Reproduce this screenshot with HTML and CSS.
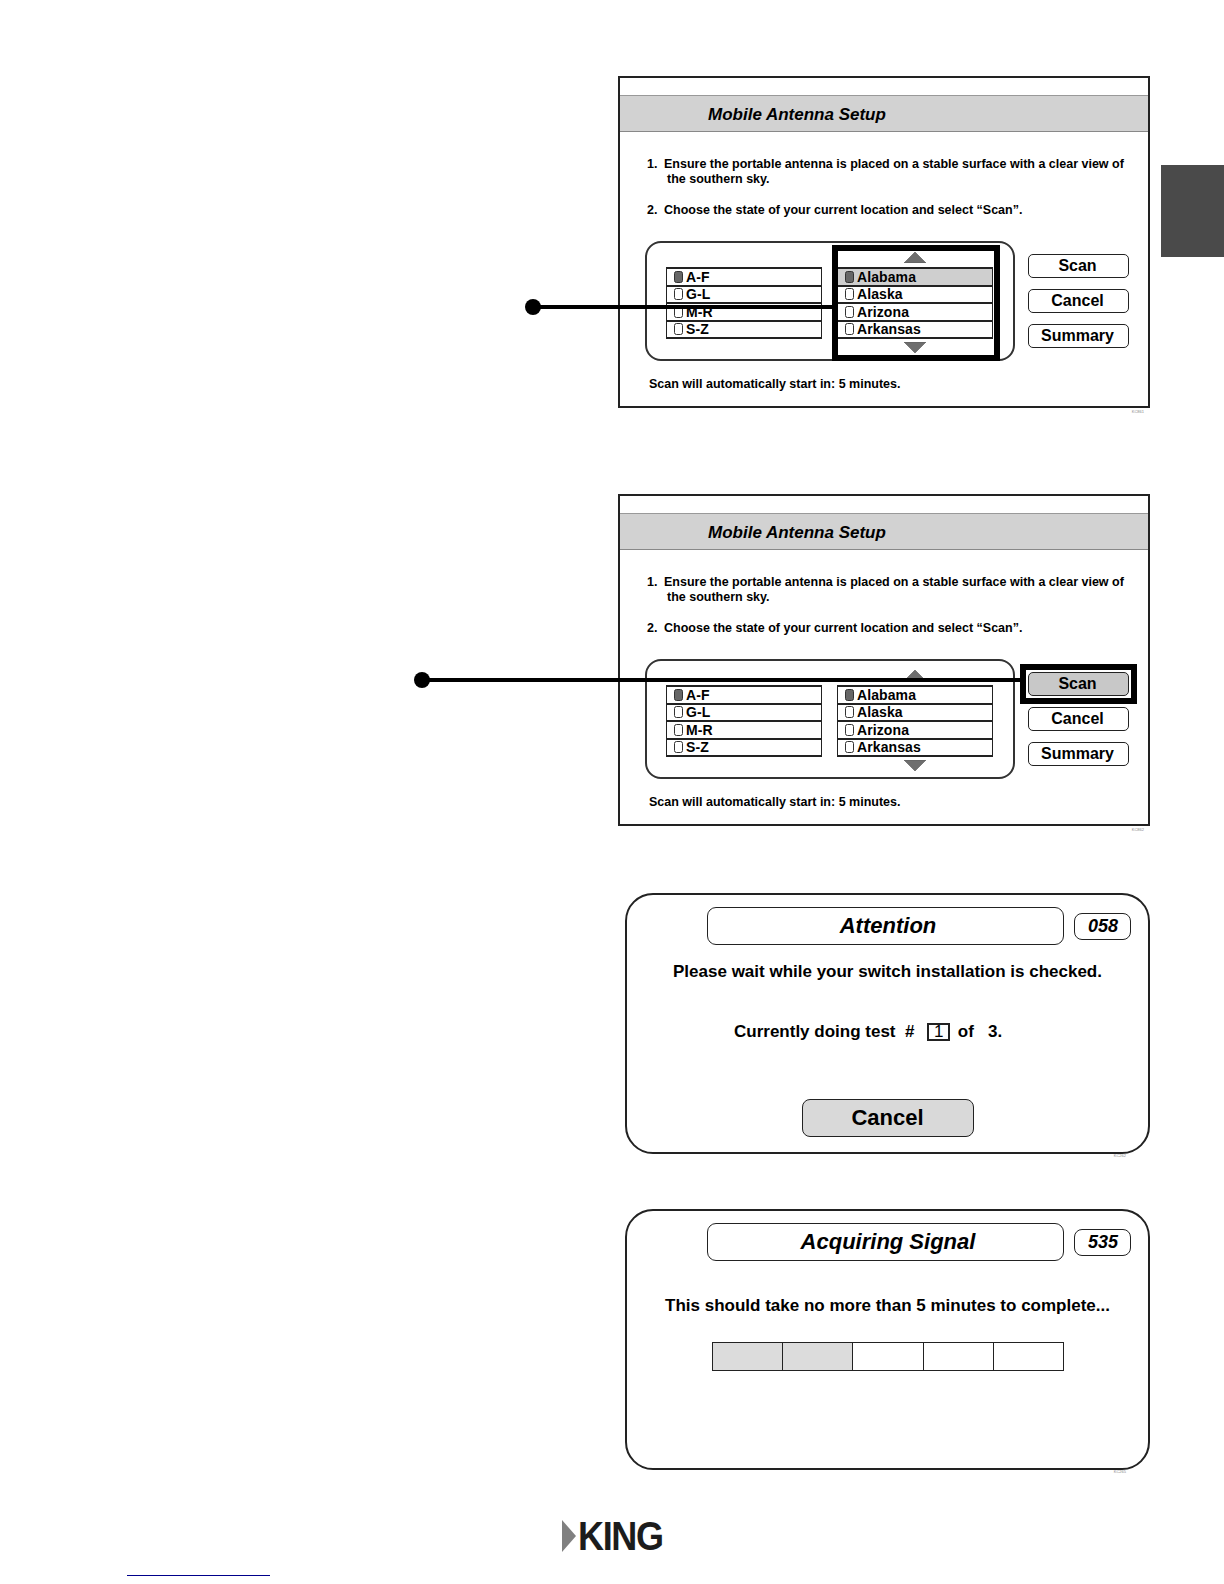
FILE: index.html
```html
<!DOCTYPE html>
<html lang="en">
<head>
<meta charset="utf-8">
<title>Mobile Antenna Setup</title>
<link rel="stylesheet" href="styles.css">
</head>
<body>
<main class="page">
  <div class="side-tab"></div>

  <section class="screen screen-first">
    <h2 class="band">Mobile Antenna Setup</h2>
    <ol class="steps">
      <li class="step"><span class="step-num">1.</span><span>Ensure the portable antenna is placed on a stable surface with a clear view of<br><span class="step-cont">the southern sky.</span></span></li>
      <li class="step step-gap"><span class="step-num">2.</span><span>Choose the state of your current location and select “Scan”.</span></li>
    </ol>
    <div class="controls">
      <div class="picker">
        <ul class="list list-regions">
          <li class="row"><i class="radio on"></i>A-F</li>
          <li class="row"><i class="radio"></i>G-L</li>
          <li class="row"><i class="radio"></i>M-R</li>
          <li class="row"><i class="radio"></i>S-Z</li>
        </ul>
        <div class="states">
          <svg class="arrow" viewBox="0 0 22 11"><path d="M11 0 22 11H0Z"/></svg>
          <ul class="list">
            <li class="row row-sel"><i class="radio on"></i>Alabama</li>
            <li class="row"><i class="radio"></i>Alaska</li>
            <li class="row"><i class="radio"></i>Arizona</li>
            <li class="row"><i class="radio"></i>Arkansas</li>
          </ul>
          <svg class="arrow" viewBox="0 0 22 11"><path d="M0 0H22L11 11Z"/></svg>
        </div>
      </div>
      <div class="buttons">
        <div class="btn">Scan</div>
        <div class="btn">Cancel</div>
        <div class="btn">Summary</div>
      </div>
    </div>
    <p class="countdown">Scan will automatically start in: 5 minutes.</p>
    <div class="focus focus-list"></div>
    <div class="leader leader-a"></div>
    <span class="code">KC861</span>
  </section>

  <section class="screen screen-second">
    <h2 class="band">Mobile Antenna Setup</h2>
    <ol class="steps">
      <li class="step"><span class="step-num">1.</span><span>Ensure the portable antenna is placed on a stable surface with a clear view of<br><span class="step-cont">the southern sky.</span></span></li>
      <li class="step step-gap"><span class="step-num">2.</span><span>Choose the state of your current location and select “Scan”.</span></li>
    </ol>
    <div class="controls">
      <div class="picker">
        <ul class="list list-regions">
          <li class="row"><i class="radio on"></i>A-F</li>
          <li class="row"><i class="radio"></i>G-L</li>
          <li class="row"><i class="radio"></i>M-R</li>
          <li class="row"><i class="radio"></i>S-Z</li>
        </ul>
        <div class="states">
          <svg class="arrow" viewBox="0 0 22 11"><path d="M11 0 22 11H0Z"/></svg>
          <ul class="list">
            <li class="row"><i class="radio on"></i>Alabama</li>
            <li class="row"><i class="radio"></i>Alaska</li>
            <li class="row"><i class="radio"></i>Arizona</li>
            <li class="row"><i class="radio"></i>Arkansas</li>
          </ul>
          <svg class="arrow" viewBox="0 0 22 11"><path d="M0 0H22L11 11Z"/></svg>
        </div>
      </div>
      <div class="buttons">
        <div class="btn btn-sel">Scan</div>
        <div class="btn">Cancel</div>
        <div class="btn">Summary</div>
      </div>
    </div>
    <p class="countdown">Scan will automatically start in: 5 minutes.</p>
    <div class="focus focus-btn"></div>
    <div class="leader leader-b"></div>
    <span class="code">KC862</span>
  </section>

  <section class="dialog dialog-attention">
    <header class="dialog-head">
      <h2 class="dialog-title">Attention</h2>
      <div class="dialog-num">058</div>
    </header>
    <p class="dialog-msg">Please wait while your switch installation is checked.</p>
    <p class="dialog-test">Currently doing test&nbsp; # <span class="digit">1</span> of &nbsp; 3.</p>
    <div class="dialog-cancel">Cancel</div>
    <span class="code code-dialog">KC262</span>
  </section>

  <section class="dialog dialog-signal">
    <header class="dialog-head">
      <h2 class="dialog-title">Acquiring Signal</h2>
      <div class="dialog-num">535</div>
    </header>
    <p class="dialog-msg dialog-msg-wide">This should take no more than 5 minutes to complete...</p>
    <div class="progress">
      <div class="cell cell-on"></div>
      <div class="cell cell-on"></div>
      <div class="cell"></div>
      <div class="cell"></div>
      <div class="cell"></div>
    </div>
    <span class="code code-dialog">KC265</span>
  </section>

  <footer class="brand">
    <svg class="brand-mark" viewBox="0 0 14 32"><path d="M0 0 14 16 0 32Z"/></svg>
    <span class="brand-name">KING</span>
  </footer>
  <div class="rule"></div>
</main>
</body>
</html>
```
FILE: styles.css
```css
* { box-sizing: border-box; margin: 0; padding: 0; }
html, body { background: #fff; }
body { font-family: "Liberation Sans", Arial, sans-serif; color: #000; }
ul, ol { list-style: none; }

.page {
  position: relative;
  width: 1224px;
  height: 1584px;
  padding-top: 76px;
  overflow: hidden;
  display: flex;
  flex-direction: column;
}
.side-tab {
  position: absolute;
  left: 1161px;
  top: 165px;
  width: 63px;
  height: 92px;
  background: #4a4a4a;
}

/* setup screens */
.screen {
  position: relative;
  width: 532px;
  height: 332px;
  margin-left: 618px;
  padding-top: 17px;
  border: 2px solid #222;
}
.screen-second { margin-top: 86px; }
.band {
  height: 37px;
  padding-left: 88px;
  background: #d2d2d2;
  border-top: 1px solid #999;
  border-bottom: 1px solid #888;
  font-size: 17px;
  line-height: 38px;
  font-style: italic;
  font-weight: 700;
}
.steps {
  padding: 25px 0 0 27px;
  font-size: 12.5px;
  line-height: 15px;
  font-weight: 700;
}
.step { display: flex; }
.step-gap { margin-top: 16px; }
.step-num { width: 17px; flex: none; }
.step-cont { padding-left: 3px; }

.controls {
  display: flex;
  gap: 13px;
  margin: 23px 0 0 25px;
}
.picker {
  display: flex;
  align-items: flex-start;
  gap: 15px;
  width: 370px;
  height: 120px;
  padding: 9px 0 0 19px;
  border: 2px solid #333;
  border-radius: 16px;
}
.list-regions { margin-top: 15px; }
.states {
  display: flex;
  flex-direction: column;
  align-items: center;
}
.arrow { display: block; width: 22px; height: 11px; fill: #6e6e6e; stroke: #555; stroke-width: .6; }
.states .list { margin: 4px 0 3px; }
.list {
  display: flex;
  flex-direction: column;
  width: 156px;
  height: 72px;
  border: 1.5px solid #222;
  border-top-width: 2px;
  border-bottom-width: 2px;
}
.row {
  display: flex;
  align-items: center;
  flex: 1 1 0;
  min-height: 0;
  padding-left: 7px;
  font-size: 14px;
  line-height: 14px;
  letter-spacing: .1px;
  font-weight: 700;
  border-bottom: 2px solid #222;
  background: #fff;
}
.row:last-child { border-bottom: 0; }
.row-sel { background: #cfcfcf; }
.radio {
  width: 9px;
  height: 12px;
  margin-right: 3px;
  border: 1.5px solid #333;
  border-radius: 2.5px;
  background: #fff;
}
.radio.on { background: #666; }

.buttons {
  display: flex;
  flex-direction: column;
  gap: 11px;
  padding-top: 12.5px;
}
.btn {
  width: 101px;
  height: 24px;
  padding-right: 2px;
  border: 1.5px solid #222;
  border-radius: 5px;
  font-size: 16px;
  line-height: 21px;
  font-weight: 700;
  text-align: center;
}
.btn-sel { background: #c8c8c8; }
.countdown {
  margin: 16px 0 0 29px;
  font-size: 12.5px;
  line-height: 15px;
  font-weight: 700;
}

/* callouts */
.focus { position: absolute; border: 6px solid #000; }
.focus-list { left: 212px; top: 167px; width: 168px; height: 116px; }
.focus-btn { left: 400px; top: 168px; width: 117px; height: 40px; }
.leader {
  position: absolute;
  height: 4px;
  background: #000;
}
.leader::before {
  content: "";
  position: absolute;
  left: -8px;
  top: -6px;
  width: 16px;
  height: 16px;
  border-radius: 50%;
  background: #000;
}
.leader-a { left: -87px; top: 227px; width: 300px; }
.leader-b { left: -198px; top: 182px; width: 598px; }
.code {
  position: absolute;
  right: 4px;
  bottom: -8px;
  font-size: 4px;
  line-height: 5px;
  color: #888;
}
.code-dialog { right: 22px; bottom: -6px; }

/* dialogs */
.dialog {
  position: relative;
  display: flex;
  flex-direction: column;
  width: 525px;
  height: 261px;
  margin-left: 625px;
  border: 2px solid #222;
  border-radius: 28px;
}
.dialog-attention { margin-top: 67px; }
.dialog-signal { margin-top: 55px; }
.dialog-head {
  display: flex;
  align-items: center;
  gap: 10px;
  padding: 12px 0 0 80px;
}
.dialog-title {
  width: 357px;
  height: 38px;
  padding-left: 5px;
  border: 1.5px solid #222;
  border-radius: 9px;
  font-size: 22px;
  line-height: 36px;
  font-style: italic;
  font-weight: 700;
  text-align: center;
}
.dialog-num {
  width: 57px;
  height: 27px;
  padding-left: 1px;
  border: 1.5px solid #222;
  border-radius: 8px;
  font-size: 18px;
  line-height: 25px;
  font-style: italic;
  font-weight: 700;
  text-align: center;
}
.dialog-msg {
  margin-top: 16px;
  font-size: 17px;
  line-height: 22px;
  font-weight: 700;
  text-align: center;
}
.dialog-msg-wide { margin-top: 34px; }
.dialog-test {
  display: flex;
  align-items: center;
  gap: 3px;
  margin-top: 38px;
  padding-left: 107px;
  font-size: 17px;
  line-height: 22px;
  font-weight: 700;
  white-space: pre;
}
.digit {
  width: 23px;
  height: 18px;
  margin-left: 5px;
  border: 2px solid #222;
  font-weight: 400;
  line-height: 14px;
  text-align: center;
}
.dialog-cancel {
  align-self: center;
  width: 172px;
  height: 38px;
  margin: auto 0 15px;
  background: #d9d9d9;
  border: 1.5px solid #222;
  border-radius: 8px;
  font-size: 22px;
  line-height: 35px;
  font-weight: 700;
  text-align: center;
}
.progress {
  display: flex;
  width: 352px;
  height: 29px;
  margin: 25px 0 0 85px;
  border: 1.5px solid #222;
}
.cell { flex: 1; border-left: 1.5px solid #222; }
.cell:first-child { border-left: 0; }
.cell-on { background: #dcdcdc; }

/* footer */
.brand {
  display: flex;
  align-items: center;
  gap: 2px;
  height: 32px;
  margin: 50px 0 0 562px;
}
.brand-mark { width: 14px; height: 32px; fill: #808080; }
.brand-name {
  font-size: 40px;
  line-height: 32px;
  font-weight: 700;
  letter-spacing: -1.5px;
  color: #1c1c1c;
  transform: scaleX(.9);
  transform-origin: left center;
}
.rule {
  width: 143px;
  height: 1px;
  margin: 23px 0 0 127px;
  background: #00008b;
}
```
